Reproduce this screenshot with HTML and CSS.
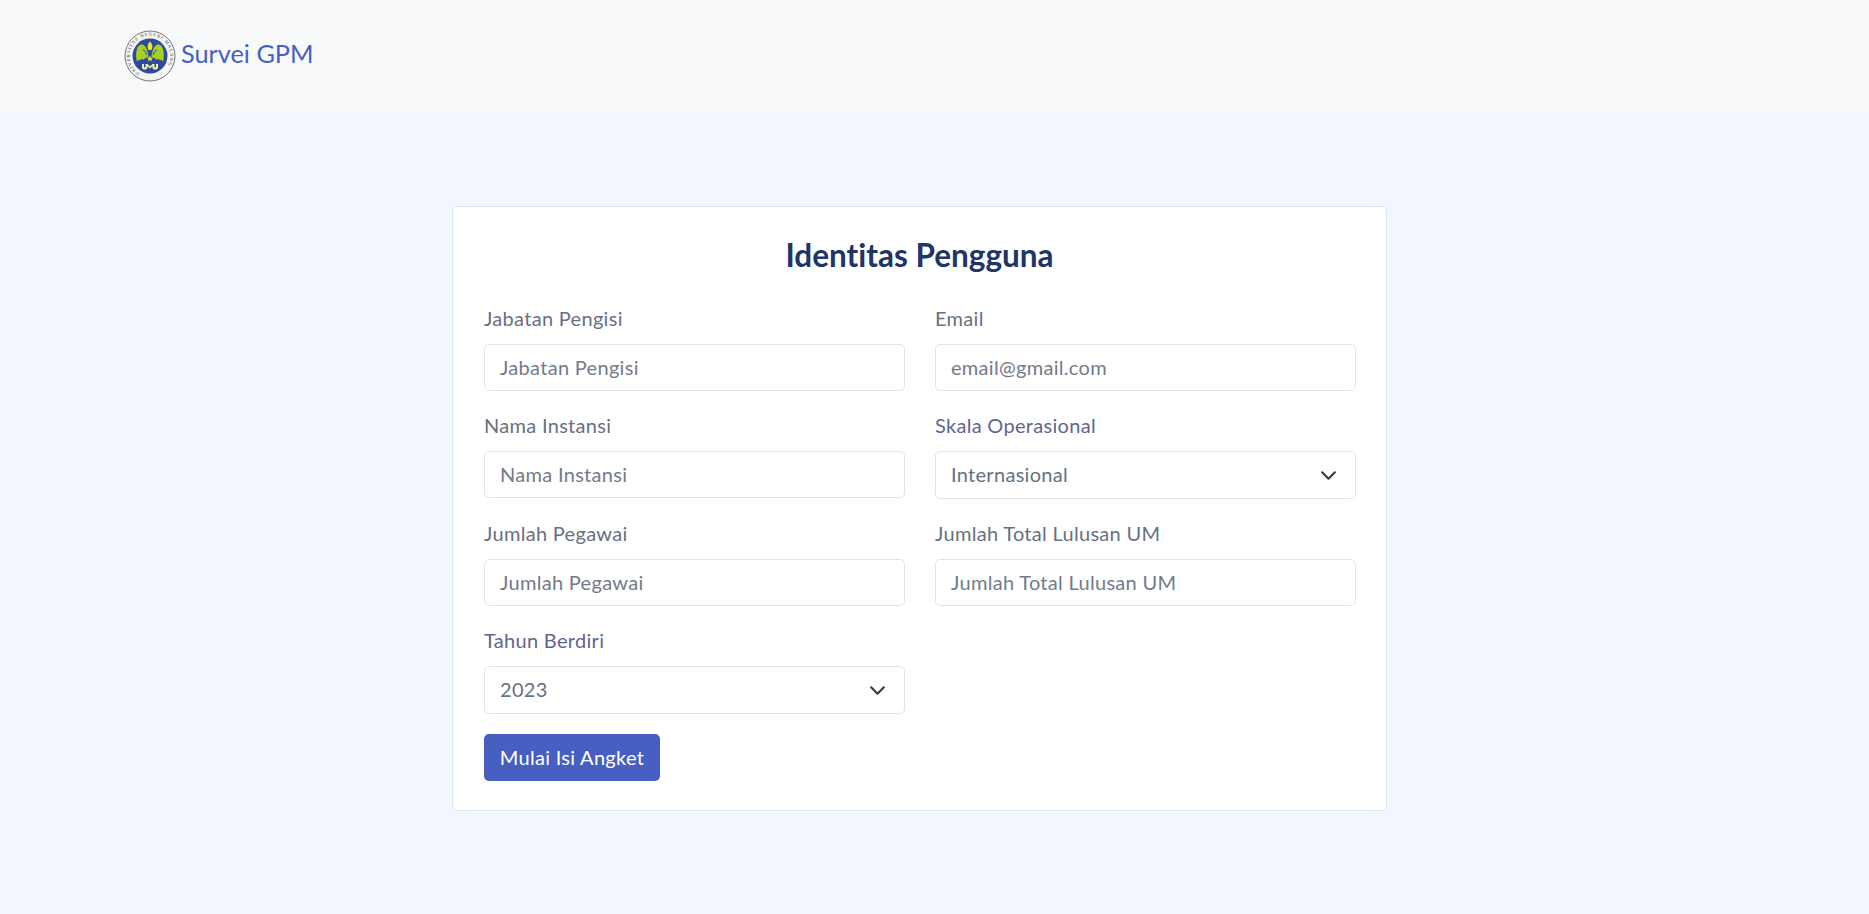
FILE: index.html
```html
<!DOCTYPE html>
<html lang="id">
<head>
<meta charset="utf-8">
<title>Survei GPM</title>
<link rel="stylesheet" href="styles.css">
</head>
<body>
<header class="topbar">
  <a class="brand" href="#">
    <svg class="logo" viewBox="0 0 52 52" aria-hidden="true">
      <circle cx="26" cy="26" r="25" fill="#f4f4f4" stroke="#777" stroke-width="1"/>
      <defs><path id="ring" d="M26 46.300a20.300 20.300 0 1 1 0-40.600a20.300 20.300 0 1 1 0 40.600"/></defs>
      <text class="logo-ring"><textPath href="#ring" startOffset="11">UNIVERSITAS NEGERI MALANG</textPath></text>
      <circle cx="26" cy="26" r="17.500" fill="#2f4a9c"/>
      <path d="M26 11.500c-2.600 2.500-3.200 6-1.300 8.500h2.600c1.900-2.500 1.300-6-1.300-8.500z" fill="#f2e13a"/>
      <path d="M24.500 27c-.5-7-3.500-13.500-7.500-12.500-4.500 1-6 9.500-4 17.500 1-2 2-3 3-1.500 1-2 2.500-2 3.500-.5 1-2 3-2.500 5-3z" fill="#a6cf1f"/>
      <path d="M27.500 27c.5-7 3.500-13.500 7.500-12.500 4.500 1 6 9.500 4 17.500-1-2-2-3-3-1.500-1-2-2.500-2-3.500-.5-1-2-3-2.500-5-3z" fill="#a6cf1f"/>
      <path d="M22.800 25c-.8-3-2.300-5-3.800-5" fill="none" stroke="#2f4a9c"/>
      <path d="M29.200 25c.8-3 2.300-5 3.800-5" fill="none" stroke="#2f4a9c"/>
      <path d="M26 25.500l.9 2.200 2.300.1-1.800 1.400.6 2.200-2-1.300-2 1.300.6-2.200-1.800-1.400 2.300-.1z" fill="#f2e13a"/>
      <path d="M18 34v3.500c0 2.800 5.500 2.800 5.500 0v-1.500l2.500 2.500 2.500-2.500v1.500c0 2.800 5.500 2.800 5.500 0v-3.500h-2v3c0 .8-1.500.8-1.500 0v-3h-2l-2.500 2.500-2.500-2.500h-2v3c0 .8-1.500.8-1.500 0v-3z" fill="#f5efb0"/>
    </svg>
    <span class="brand-name">Survei GPM</span>
  </a>
</header>
<main class="page">
  <form class="card">
    <h1 class="card-title">Identitas Pengguna</h1>
    <div class="fields">
      <div class="field">
        <label class="field-label">Jabatan Pengisi</label>
        <input class="control" type="text" placeholder="Jabatan Pengisi">
      </div>
      <div class="field">
        <label class="field-label">Email</label>
        <input class="control" type="text" placeholder="email@gmail.com">
      </div>
      <div class="field">
        <label class="field-label">Nama Instansi</label>
        <input class="control" type="text" placeholder="Nama Instansi">
      </div>
      <div class="field">
        <label class="field-label label-accent">Skala Operasional</label>
        <select class="control control-select"><option>Internasional</option></select>
      </div>
      <div class="field">
        <label class="field-label">Jumlah Pegawai</label>
        <input class="control" type="text" placeholder="Jumlah Pegawai">
      </div>
      <div class="field">
        <label class="field-label">Jumlah Total Lulusan UM</label>
        <input class="control" type="text" placeholder="Jumlah Total Lulusan UM">
      </div>
      <div class="field">
        <label class="field-label label-accent">Tahun Berdiri</label>
        <select class="control control-select"><option>2023</option></select>
      </div>
    </div>
    <button class="submit" type="button">Mulai Isi Angket</button>
  </form>
</main>
</body>
</html>
```
FILE: styles.css
```css
* { box-sizing: border-box; }
html, body { height: 100%; }
body {
  margin: 0;
  background: #f1f6ff;
  font-family: "Lato", "Open Sans", sans-serif;
  font-size: 20px;
  letter-spacing: .3px;
  font-variant-ligatures: none;
  color: #667181;
  overflow: hidden;
}
.topbar {
  height: 113px;
  background: #f8f9fb;
  padding: 30px 0 0 124px;
}
.brand {
  display: inline-flex;
  align-items: center;
  gap: 5px;
  text-decoration: none;
}
.logo { width: 52px; height: 52px; display: block; }
.logo-ring { font: 400 4.6px "Liberation Serif", serif; letter-spacing: 1px; fill: #444; }
.brand-name { font-size: 25.3px; letter-spacing: 0; color: #4560c2; margin-bottom: 7px; }
.page {
  display: flex;
  justify-content: center;
  padding: 93px 30px 0 0;
}
.card {
  width: 935px;
  height: 605px;
  background: #fff;
  border: 1px solid #dfe5ee;
  border-radius: 5px;
  padding: 30px 31px 0;
}
.card-title {
  margin: 0 0 33px;
  text-align: center;
  font-size: 31.5px;
  line-height: 36px;
  letter-spacing: 0;
  font-weight: 700;
  color: #1e3566;
}
.fields {
  display: grid;
  grid-template-columns: 421px 421px;
  column-gap: 30px;
  row-gap: 22px;
}
.field { display: flex; flex-direction: column; }
.field-label {
  height: 30px;
  line-height: 24px;
  margin-bottom: 8px;
  color: #667181;
}
.label-accent { color: #5f6590; }
.control {
  width: 421px;
  height: 47px;
  border: 1px solid #dbe6f1;
  border-radius: 5px;
  background: #fff;
  padding: 0 15px 2px;
  font: inherit;
  letter-spacing: inherit;
  color: #667181;
  outline: none;
}
.control::placeholder { color: #727b8a; opacity: 1; }
.control-select {
  height: 48px;
  appearance: none;
  -webkit-appearance: none;
  background-image: url("data:image/svg+xml,%3csvg xmlns='http://www.w3.org/2000/svg' viewBox='0 0 16 16'%3e%3cpath fill='none' stroke='%23343a40' stroke-linecap='round' stroke-linejoin='round' stroke-width='2' d='M2 5l6 6 6-6'/%3e%3c/svg%3e");
  background-repeat: no-repeat;
  background-position: right 18px center;
  background-size: 17px 17px;
}
.submit {
  display: block;
  margin-top: 20px;
  width: 176px;
  height: 47px;
  border: 0;
  border-radius: 5px;
  padding: 0 0 2px;
  background: #465fc0;
  color: #fff;
  font: inherit;
  letter-spacing: inherit;
}
```
